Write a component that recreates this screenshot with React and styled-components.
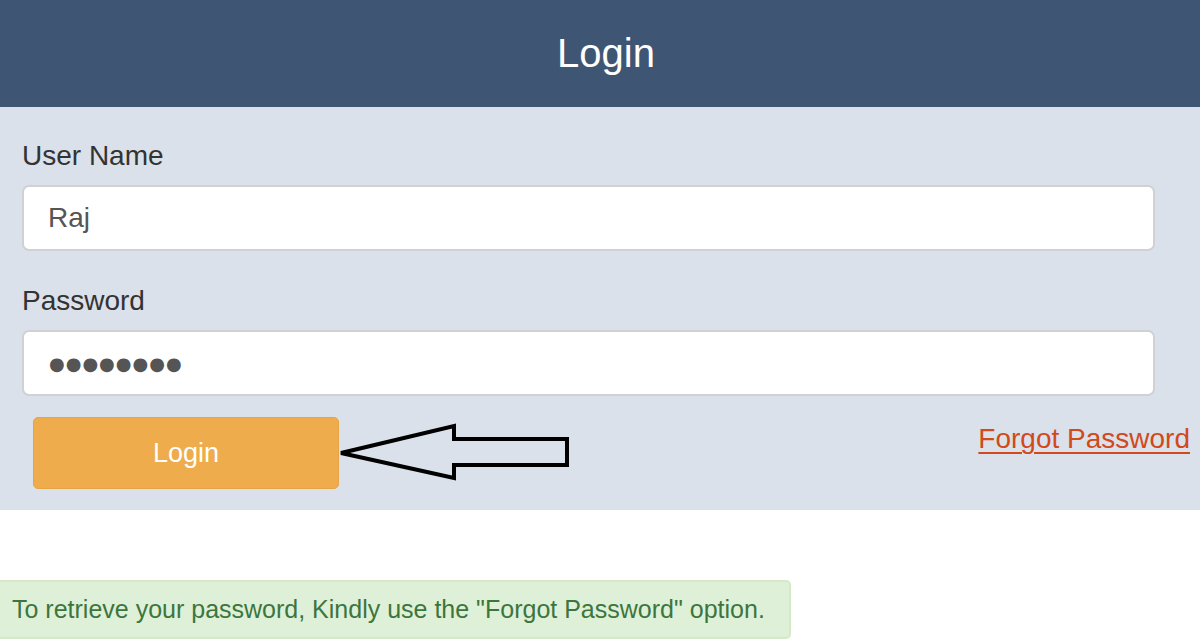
import React from "react";
import styled, { createGlobalStyle } from "styled-components";

const GlobalStyle = createGlobalStyle`
  body {
    margin: 0;
    background: #fff;
    font-family: "Liberation Sans", Arial, sans-serif;
  }
`;

const Header = styled.header`
  height: 107px;
  background: #3f5574;
  color: #fff;
  display: flex;
  align-items: center;
  justify-content: center;
  font-size: 40px;
  padding-left: 12px;
  box-sizing: border-box;
`;

const Panel = styled.div`
  background: #dbe1ea;
  padding: 33px 45px 21px 22px;
  box-sizing: border-box;
`;

const Label = styled.label`
  display: block;
  font-size: 28px;
  line-height: 32px;
  color: #333;
  margin-bottom: 13px;
`;

const Field = styled.div`
  margin-bottom: ${p => (p.$last ? "21px" : "34px")};
`;

const Input = styled.input`
  display: block;
  width: 100%;
  height: 66px;
  box-sizing: border-box;
  border: 2px solid #cfd1d4;
  border-radius: 7px;
  background: #fff;
  padding: 0 24px;
  font-family: inherit;
  font-size: 28px;
  color: #555;
  outline: none;
`;

const Dots = styled(Input)`
  font-family: "DejaVu Sans", sans-serif;
  font-size: 18px;
  letter-spacing: 1px;
  color: #555;
  padding-left: 25px;
`;

const Actions = styled.div`
  display: flex;
  align-items: center;
  justify-content: space-between;
  padding-left: 11px;
  margin-right: -35px;
`;

const Left = styled.div`
  display: flex;
  align-items: center;
`;

const Button = styled.button`
  width: 306px;
  height: 72px;
  background: #eeac4d;
  border: 1px solid #e6a444;
  border-radius: 5px;
  color: #fff;
  font-family: inherit;
  font-size: 27px;
  cursor: pointer;
`;

const ForgotLink = styled.a`
  color: #d2491a;
  font-size: 28px;
  text-decoration: underline;
  text-underline-offset: 4px;
  text-decoration-thickness: 2px;
  margin-top: -28px;
`;

const Alert = styled.div`
  margin-top: 70px;
  width: 791px;
  height: 59px;
  box-sizing: border-box;
  display: flex;
  align-items: center;
  padding-left: 12px;
  background: #dff0d8;
  border: 2px solid #d6e9c6;
  border-left: none;
  border-radius: 0 5px 5px 0;
  color: #3c763d;
  font-size: 25px;
`;

const Arrow = () => (
  <svg width="240" height="60" viewBox="0 0 240 60">
    <polygon
      points="2,30 115,3 115,16 228,16 228,42 115,42 115,55"
      fill="none"
      stroke="#000"
      strokeWidth="4"
      strokeLinejoin="miter"
    />
  </svg>
);

export default function App() {
  return (
    <>
      <GlobalStyle />
      <Header>Login</Header>
      <Panel>
        <Field>
          <Label>User Name</Label>
          <Input type="text" defaultValue="Raj" />
        </Field>
        <Field $last>
          <Label>Password</Label>
          <Dots type="text" readOnly value="●●●●●●●●" aria-label="Password" />
        </Field>
        <Actions>
          <Left>
            <Button>Login</Button>
            <Arrow />
          </Left>
          <ForgotLink href="#">Forgot Password</ForgotLink>
        </Actions>
      </Panel>
      <Alert>To retrieve your password, Kindly use the "Forgot Password" option.</Alert>
    </>
  );
}
